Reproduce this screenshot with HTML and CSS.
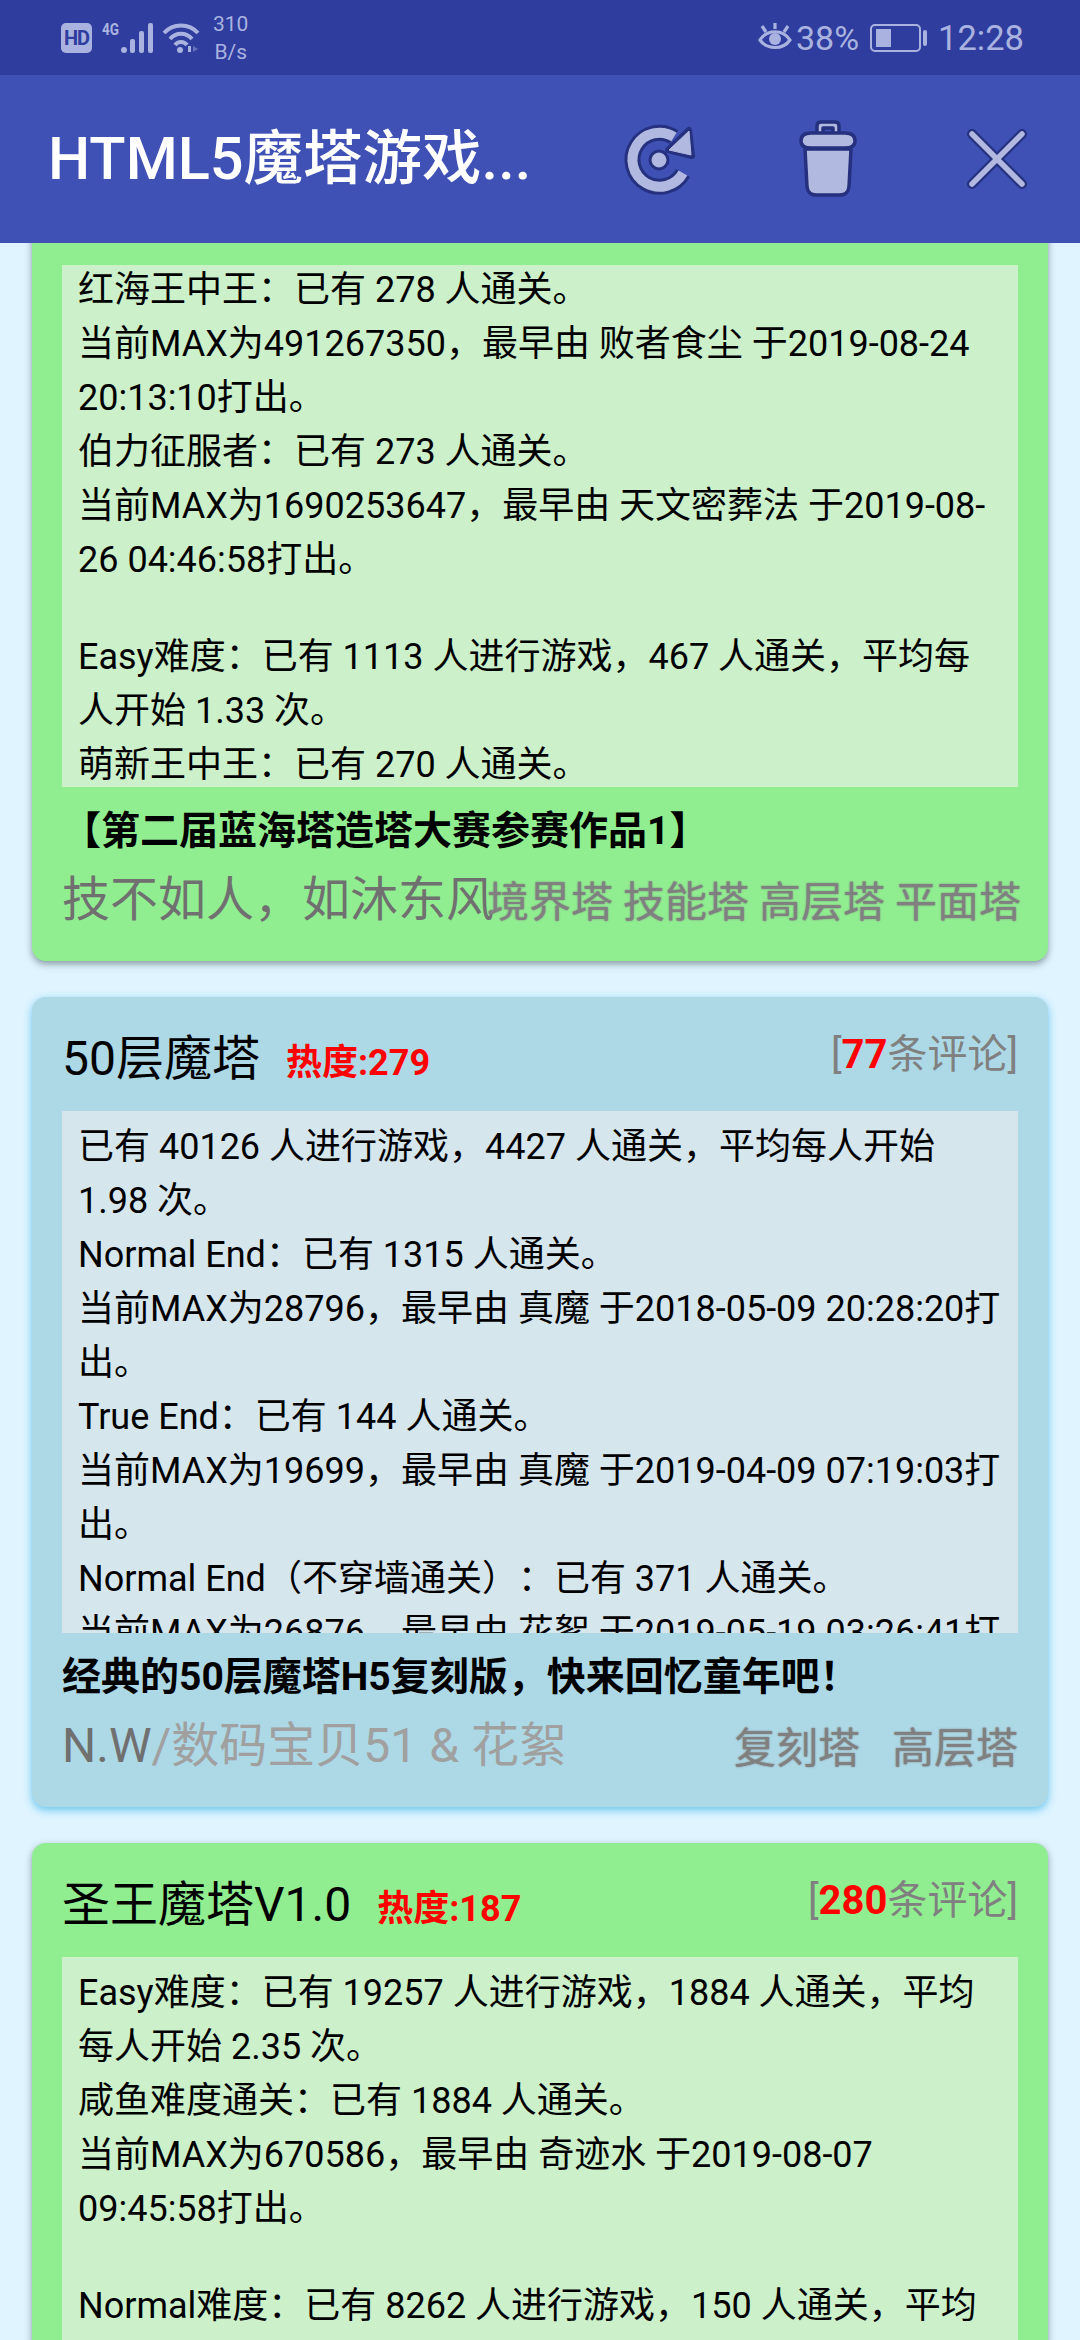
FILE: index.html
```html
<!DOCTYPE html>
<html lang="zh-CN">
<head>
<meta charset="utf-8">
<title>HTML5魔塔游戏</title>
<link rel="stylesheet" href="styles.css">
</head>
<body>
<div class="statusbar">
  <div class="status-left">
    <span class="hd">HD</span>
    <span class="net">4G</span>
    <svg class="signal" width="32" height="32" viewBox="0 0 32 32"><circle cx="3" cy="28" r="3"/><rect x="9" y="17" width="5" height="14" rx="2"/><rect x="18" y="9" width="5" height="22" rx="2"/><rect x="27" y="1" width="5" height="30" rx="2"/></svg>
    <svg class="wifi" width="38" height="32" viewBox="0 0 38 32"><g fill="none"><path d="M2 11 C11 1 27 1 36 11"/><path d="M8 17 C14 10 24 10 30 17"/><path d="M13 23 C16 19 22 19 25 23"/></g><circle class="dot" cx="18" cy="28" r="3"/><path class="dot" d="M26 30 L26 24 L29 24 L29 30Z"/><path class="dim" d="M31 24 L36 27 L31 30Z"/></svg>
    <div class="speed"><span>310</span><span>B/s</span></div>
  </div>
  <div class="status-right">
    <svg class="eye" width="36" height="30" viewBox="0 0 34 30"><path fill="none" d="M2 17 C9 6 25 6 32 17 C25 27 9 27 2 17Z"/><circle class="dot" cx="17" cy="16" r="6"/><path fill="none" d="M4 3 L8 9 M17 0 L17 6 M30 3 L26 9"/></svg>
    <span class="pct">38%</span>
    <div class="battery"><div class="battery-body"><div class="battery-level"></div></div><div class="battery-cap"></div></div>
    <span class="clock">12:28</span>
  </div>
</div>

<header class="appbar">
  <h1 class="apptitle">HTML5魔塔游戏...</h1>
  <div class="actions">
    <svg class="act" width="80" height="80" viewBox="0 0 80 80">
      <g class="outline"><path d="M55 18 A27 27 0 1 0 64 54" fill="none" stroke-width="16"/><path d="M70 11 L73 37 L49 31Z" stroke-width="6" stroke-linejoin="round"/><circle cx="40" cy="41" r="10"/></g>
      <g class="inner"><path d="M55 18 A27 27 0 1 0 64 54" fill="none" stroke-width="10"/><path d="M70 12 L72 36 L50 31Z"/><circle cx="40" cy="41" r="7"/></g>
    </svg>
    <svg class="act" width="80" height="80" viewBox="0 0 80 80">
      <path class="can" d="M17 30 L63 30 L61 68 Q60 76 52 76 L28 76 Q20 76 19 68Z"/>
      <path class="can" d="M29 16 L29 7 Q29 3 33 3 L47 3 Q51 3 51 7 L51 16 L45 16 L45 9 L35 9 L35 16Z"/>
      <path class="can" d="M13 22 Q13 14 23 14 L57 14 Q67 14 67 22 Q67 29 57 29 L23 29 Q13 29 13 22Z"/>
    </svg>
    <svg class="act" width="80" height="80" viewBox="0 0 80 80">
      <g class="outline"><path d="M15 15 L65 65 M65 15 L15 65" fill="none" stroke-width="10" stroke-linecap="round"/></g>
      <g class="inner"><path d="M15 15 L65 65 M65 15 L15 65" fill="none" stroke-width="5.5" stroke-linecap="round"/></g>
    </svg>
  </div>
</header>

<main class="list">
  <article class="card card-green card-first">
    <div class="card-head"></div>
    <div class="stats stats-green">
      <div class="stats-scroll">红海王中王：已有 278 人通关。<br>当前MAX为491267350，最早由 败者食尘 于2019-08-24 20:13:10打出。<br>伯力征服者：已有 273 人通关。<br>当前MAX为1690253647，最早由 天文密葬法 于2019-08-26 04:46:58打出。<div class="para-gap"></div>Easy难度：已有 1113 人进行游戏，467 人通关，平均每人开始 1.33 次。<br>萌新王中王：已有 270 人通关。</div>
    </div>
    <div class="card-foot">
      <p class="desc">【第二届蓝海塔造塔大赛参赛作品1】</p>
      <div class="meta">
        <span class="author author-tight">技不如人，如沐东风</span>
        <div class="tags tags-tight"><span>境界塔</span><span>技能塔</span><span>高层塔</span><span>平面塔</span></div>
      </div>
    </div>
  </article>

  <article class="card card-blue">
    <div class="card-head">
      <div class="head-left"><h2 class="name">50层魔塔</h2><span class="heat">热度:279</span></div>
      <span class="comments">[<b>77</b>条评论]</span>
    </div>
    <div class="stats stats-blue">
      <div class="stats-text">已有 40126 人进行游戏，4427 人通关，平均每人开始 1.98 次。<br>Normal End：已有 1315 人通关。<br>当前MAX为28796，最早由 真魔 于2018-05-09 20:28:20打出。<br>True End：已有 144 人通关。<br>当前MAX为19699，最早由 真魔 于2019-04-09 07:19:03打出。<br>Normal End（不穿墙通关）：已有 371 人通关。<br>当前MAX为26876，最早由 花絮 于2019-05-19 03:26:41打出。</div>
    </div>
    <div class="card-foot">
      <p class="desc">经典的50层魔塔H5复刻版，快来回忆童年吧！</p>
      <div class="meta">
        <span class="author">N.W<i class="coauthor">/数码宝贝51 &amp; 花絮</i></span>
        <div class="tags"><span>复刻塔</span><span>高层塔</span></div>
      </div>
    </div>
  </article>

  <article class="card card-green">
    <div class="card-head">
      <div class="head-left"><h2 class="name">圣王魔塔V1.0</h2><span class="heat">热度:187</span></div>
      <span class="comments">[<b>280</b>条评论]</span>
    </div>
    <div class="stats stats-green">
      <div class="stats-text">Easy难度：已有 19257 人进行游戏，1884 人通关，平均每人开始 2.35 次。<br>咸鱼难度通关：已有 1884 人通关。<br>当前MAX为670586，最早由 奇迹水 于2019-08-07 09:45:58打出。<div class="para-gap"></div>Normal难度：已有 8262 人进行游戏，150 人通关，平均</div>
    </div>
  </article>
</main>
</body>
</html>
```
FILE: styles.css
```css
* { box-sizing: border-box; }
html, body { margin: 0; padding: 0; }
body {
  width: 1080px;
  height: 2340px;
  overflow: hidden;
  background: #dff4ff;
  font-family: Roboto, "Noto Sans CJK SC", sans-serif;
  color: #000;
  text-spacing-trim: space-all;
}

/* status bar */
.statusbar {
  height: 75px;
  background: #2f3d9e;
  color: #aab3e0;
  display: flex;
  justify-content: space-between;
  align-items: center;
  padding: 0 56px 0 61px;
}
.status-left, .status-right { display: flex; align-items: center; }
.hd {
  width: 31px;
  height: 30px;
  margin-top: 1px;
  border-radius: 5px;
  background: #aab3e0;
  color: #2f3d9e;
  font-size: 20px;
  font-weight: 700;
  line-height: 30px;
  text-align: center;
  letter-spacing: -1px;
}
.net {
  font-size: 17px;
  font-weight: 700;
  width: 19px;
  margin: -17px 0 0 10px;
  transform: scaleX(.8);
  transform-origin: left;
}
.signal { fill: #aab3e0; }
.wifi { margin-left: 9px; }
.wifi g { stroke: #aab3e0; stroke-width: 4; }
.wifi .dot { fill: #aab3e0; }
.wifi .dim { fill: #6672bd; }
.speed {
  display: flex;
  flex-direction: column;
  align-items: center;
  margin-left: 13px;
  font-size: 21px;
  line-height: 28px;
}
.eye path { stroke: #aab3e0; stroke-width: 3.2; }
.eye .dot { fill: #aab3e0; }
.pct { font-size: 34px; margin-left: 3px; }
.battery { display: flex; align-items: center; margin-left: 11px; }
.battery-body {
  width: 51px;
  height: 28px;
  border: 2px solid #aab3e0;
  border-radius: 5px;
  padding: 3px 4px;
}
.battery-level { width: 15px; height: 100%; background: #aab3e0; }
.battery-cap { width: 4px; height: 16px; margin-left: 2px; background: #aab3e0; border-radius: 2px; }
.clock { font-size: 34.5px; margin-left: 11px; }

/* app bar */
.appbar {
  height: 168px;
  background: #3f51b5;
  display: flex;
  align-items: center;
  padding: 0 43px 0 48px;
  position: relative;
  z-index: 2;
}
.apptitle {
  margin: -12px 0 0;
  flex: 1;
  font-size: 59.5px;
  font-weight: 500;
  color: #fff;
  white-space: nowrap;
}
.actions { display: flex; gap: 89px; align-items: center; }
.act { display: block; }
.outline * { stroke: #25317e; fill: #25317e; }
.inner * { stroke: #b2b9e0; fill: #b2b9e0; }
.outline path[fill="none"], .inner path[fill="none"] { fill: none; }
.can { fill: #b2b9e0; stroke: #25317e; stroke-width: 3.5; stroke-linejoin: round; }

/* list */
.list {
  height: 2097px;
  overflow: hidden;
  padding: 0 32px;
  display: flex;
  flex-direction: column;
  gap: 36px;
}
.card {
  flex: none;
  border-radius: 14px;
  padding: 0 30px;
}
.card-first { margin-top: -92px; }
.card-green { background: #90ee90; box-shadow: 0 3px 7px rgba(60, 80, 80, .55); }
.card-blue { background: #add8e6; box-shadow: 0 3px 9px #66c6ee; }
.card-head {
  height: 114px;
  display: flex;
  justify-content: space-between;
  align-items: flex-start;
}
.head-left { display: flex; align-items: baseline; gap: 26px; padding-top: 29px; }
.name { margin: 0; font-size: 48px; font-weight: 400; line-height: 66px; white-space: nowrap; }
.heat { font-size: 36px; font-weight: 700; color: #f00; white-space: nowrap; }
.comments { font-size: 40px; line-height: 54px; color: #808080; padding-top: 31px; white-space: nowrap; }
.comments b { color: #f00; font-weight: 700; }

.stats {
  height: 522px;
  overflow: hidden;
  padding: 0 14px 0 16px;
  font-size: 36px;
  line-height: 54px;
}
.stats-green { background: #ccf0ca; }
.stats-blue { background: #d6e6ed; }
.stats-text { padding-top: 9px; }
.stats-scroll { margin-top: -2px; }
.para-gap { height: 43px; }

.card-foot { height: 174px; }
.desc {
  margin: 0;
  padding-top: 16px;
  font-size: 39px;
  font-weight: 700;
  line-height: 56px;
  white-space: nowrap;
}
.meta {
  display: flex;
  justify-content: space-between;
  align-items: center;
  margin-top: 3px;
  height: 66px;
}
.author { font-size: 48px; color: #707070; white-space: nowrap; }
.author-tight { width: 425px; }
.coauthor { font-style: normal; color: #a0a0a0; }
.tags {
  display: flex;
  gap: 32px;
  flex: none;
  font-size: 42px;
  color: #808080;
  text-shadow: 0 0 2px #808080;
  padding-top: 6px;
}
.tags-tight { gap: 10px; }
```
